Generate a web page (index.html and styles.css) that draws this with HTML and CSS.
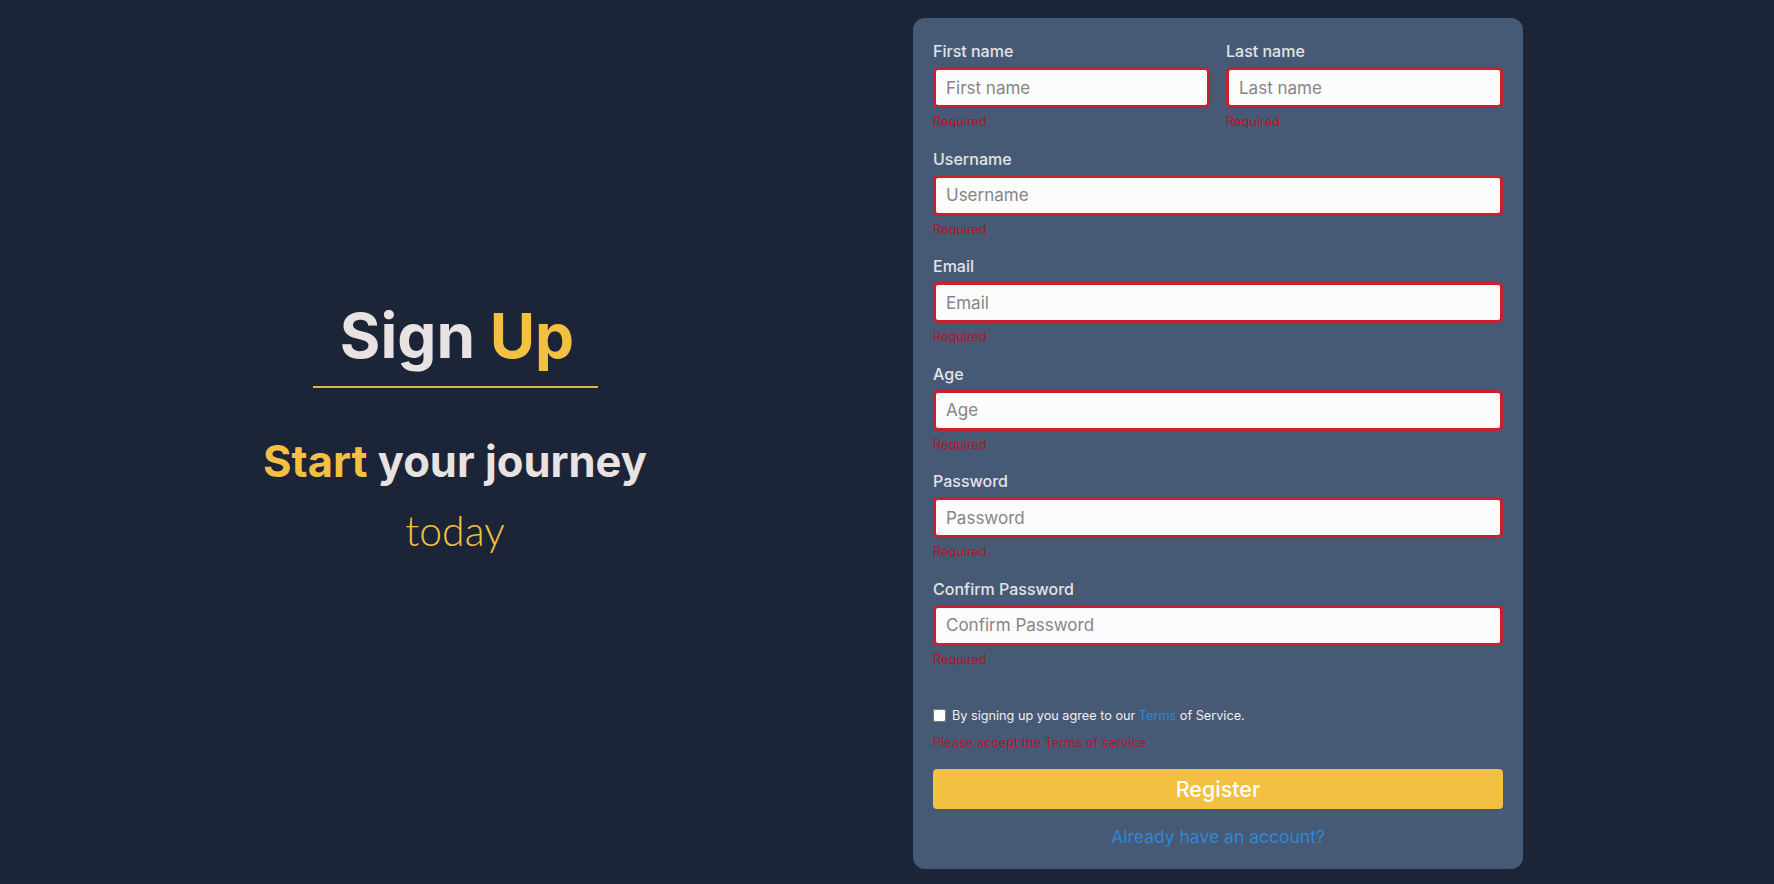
FILE: index.html
```html
<!DOCTYPE html>
<html lang="en">
<head>
    <meta charset="UTF-8">
    <meta name="viewport" content="width=device-width, initial-scale=1.0">
    <title>Sign Up</title>
    <link rel="stylesheet" href="styles.css">
</head>
<body>
    <main class="page">
        <!-- Left side heading -->
        <section class="intro">
            <h1 class="intro-title">Sign <span class="accent">Up</span></h1>
            <h2 class="intro-sub"><span class="accent">Start</span> your journey</h2>
            <p class="intro-today">today</p>
        </section>

        <!-- Register form -->
        <form class="card">
            <div class="name-row">
                <div class="field">
                    <label for="first">First name</label>
                    <input id="first" type="text" placeholder="First name">
                    <span class="error">Required</span>
                </div>
                <div class="field">
                    <label for="last">Last name</label>
                    <input id="last" type="text" placeholder="Last name">
                    <span class="error">Required</span>
                </div>
            </div>
            <div class="field">
                <label for="username">Username</label>
                <input id="username" type="text" placeholder="Username">
                <span class="error">Required</span>
            </div>
            <div class="field">
                <label for="email">Email</label>
                <input id="email" type="text" placeholder="Email">
                <span class="error">Required</span>
            </div>
            <div class="field">
                <label for="age">Age</label>
                <input id="age" type="text" placeholder="Age">
                <span class="error">Required</span>
            </div>
            <div class="field">
                <label for="password">Password</label>
                <input id="password" type="password" placeholder="Password">
                <span class="error">Required</span>
            </div>
            <div class="field">
                <label for="confirm">Confirm Password</label>
                <input id="confirm" type="password" placeholder="Confirm Password">
                <span class="error">Required</span>
            </div>

            <div class="terms">
                <input id="terms" type="checkbox">
                <label for="terms">By signing up you agree to our <a href="#terms">Terms</a> of Service.</label>
            </div>
            <span class="error terms-error">Please accept the Terms of service</span>

            <button type="button" class="submit">Register</button>
            <a class="login-link" href="#login">Already have an account?</a>
        </form>
    </main>
</body>
</html>
```

FILE: styles.css
```css
* {
    box-sizing: border-box;
}

body {
    margin: 0;
    background-color: #1c2438;
    font-family: 'Inter', 'Liberation Sans', sans-serif;
}

.page {
    display: flex;
    height: 884px;
    padding-top: 18px;
    align-items: flex-start;
}

.accent {
    color: #f4c042;
}

/* left side */
.intro {
    width: 913px;
    height: 851px;
    padding-right: 3px;
    padding-bottom: 30px;
    display: flex;
    flex-direction: column;
    align-items: center;
    justify-content: center;
    text-align: center;
    color: #e8e2e2;
}

.intro-title {
    width: 285px;
    margin: 0;
    padding-left: 4px;
    padding-bottom: 14px;
    border-bottom: 2px solid #d9b64c;
    font-size: 62px;
    line-height: 73px;
    font-weight: 700;
}

.intro-sub {
    margin: 45px 0 0;
    font-size: 43.5px;
    line-height: 56px;
    font-weight: 700;
}

.intro-today {
    margin: 14px 0 0;
    color: #f4c042;
    font-family: 'Lato', sans-serif;
    font-size: 41px;
    line-height: 56px;
    font-weight: 300;
}

/* form card */
.card {
    width: 610px;
    height: 851px;
    padding: 21px 20px 20px;
    display: flex;
    flex-direction: column;
    background-color: #475a75;
    border-radius: 12px;
}

.name-row {
    display: flex;
    flex-shrink: 0;
    gap: 16px;
}

.name-row .field {
    flex: 1;
    min-width: 0;
}

.field {
    display: flex;
    flex-direction: column;
    flex-shrink: 0;
    height: 107.6px;
}

.field label {
    height: 24px;
    margin-bottom: 4px;
    color: #e3e3e6;
    font-size: 16px;
    line-height: 24px;
    font-weight: 500;
}

.field input {
    width: 100%;
    height: 41px;
    padding: 0 10px;
    background-color: #fcfcfc;
    border: 3px solid #c8202e;
    border-radius: 5px;
    font-family: inherit;
    font-size: 17px;
    outline: none;
}

.field input::placeholder {
    color: #858585;
}

.error {
    margin-top: 6px;
    color: #b3132b;
    font-size: 12.8px;
    line-height: 16px;
}

.terms {
    display: flex;
    align-items: center;
    gap: 6px;
    margin-top: 22px;
    color: #eeeeee;
    font-size: 12.7px;
    line-height: 18px;
}

.terms input {
    width: 13px;
    height: 13px;
    margin: 0;
}

.terms a {
    color: #2f86d8;
    text-decoration: none;
}

.terms-error {
    margin-top: 10px;
}

.submit {
    flex-shrink: 0;
    height: 40px;
    margin-top: 18px;
    background-color: #f4c042;
    color: #fff;
    border: none;
    border-radius: 4px;
    font-family: inherit;
    font-size: 21.5px;
    font-weight: 500;
    cursor: pointer;
}

.login-link {
    margin-top: 15px;
    color: #2f86d8;
    text-align: center;
    text-decoration: none;
    font-size: 17.5px;
    line-height: 26px;
}
```
